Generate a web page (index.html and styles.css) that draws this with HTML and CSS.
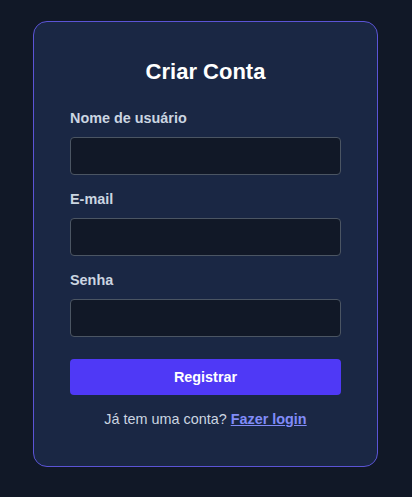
FILE: index.html
```html
<!DOCTYPE html>
<html lang="pt">
<head>
<meta charset="utf-8">
<title>Criar Conta</title>
<link rel="stylesheet" href="styles.css">
</head>
<body>
<main class="page">
  <form class="card">
    <h2 class="title">Criar Conta</h2>
    <div class="field">
      <label class="label" for="u">Nome de usuário</label>
      <input class="input" id="u" type="text">
    </div>
    <div class="field">
      <label class="label" for="e">E-mail</label>
      <input class="input" id="e" type="email">
    </div>
    <div class="field">
      <label class="label" for="p">Senha</label>
      <input class="input" id="p" type="password">
    </div>
    <button class="btn" type="button">Registrar</button>
    <p class="foot">Já tem uma conta? <a class="link" href="#">Fazer login</a></p>
  </form>
</main>
</body>
</html>
```
FILE: styles.css
```css
* { box-sizing: border-box; }
html, body { margin: 0; padding: 0; }
body {
  background: #111827;
  font-family: "Liberation Sans", Arial, sans-serif;
  min-height: 100vh;
}
.page {
  display: flex;
  justify-content: center;
  padding-top: 21px;
  padding-right: 1px;
}
.card {
  width: 345px;
  background: #1a2744;
  border: 1px solid #5b54d6;
  border-radius: 14px;
  padding: 36px 36px 37px 36px;
  display: flex;
  flex-direction: column;
}
.title {
  margin: 0 0 22px;
  font-size: 22px;
  line-height: 28px;
  font-weight: bold;
  color: #ffffff;
  text-align: center;
}
.field {
  display: flex;
  flex-direction: column;
  margin-bottom: 14px;
}
.field:last-of-type { margin-bottom: 22px; }
.label {
  font-size: 14.4px;
  line-height: 20px;
  font-weight: bold;
  color: #cbd5e1;
  margin-bottom: 9px;
}
.input {
  height: 38px;
  background: #111827;
  border: 1px solid #4b5563;
  border-radius: 4px;
  color: #fff;
  padding: 0 10px;
  font: inherit;
}
.btn {
  height: 36px;
  border: none;
  border-radius: 4px;
  background: #4f39f6;
  color: #ffffff;
  font: bold 14.4px/20px "Liberation Sans", Arial, sans-serif;
  margin-bottom: 14px;
}
.foot {
  margin: 0;
  text-align: center;
  font-size: 14.4px;
  line-height: 20px;
  color: #cbd5e1;
}
.link {
  color: #818cf8;
  font-weight: bold;
  text-decoration: underline;
}
```
